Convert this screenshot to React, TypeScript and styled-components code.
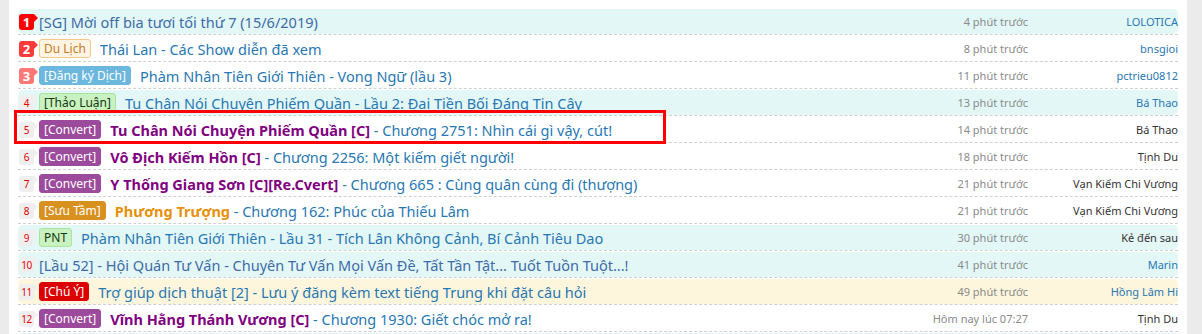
import React from "react";
import styled, { createGlobalStyle, css } from "styled-components";

const Global = createGlobalStyle`
  html, body { margin: 0; padding: 0; overflow: hidden; }
  body { background: #ebebeb; font-family: "Noto Sans", "Open Sans", sans-serif; }
`;

const Panel = styled.div`
  margin-left: 9px;
  width: 1178px;
  min-height: 334px;
  background: #fff;
  padding: 8px 9px 0;
  box-sizing: border-box;
`;

const List = styled.ul`
  list-style: none;
  margin: 0;
  padding: 0;
`;

const Item = styled.li`
  position: relative;
  padding-top: 1px;
  border-bottom: 1px dashed #cfcfcf;
`;

type Tone = "cyan" | "yellow" | "white";
const bgs: Record<Tone, string> = { cyan: "#e3f7f6", yellow: "#fdf5dc", white: "transparent" };

const RowBody = styled.div<{ $tone: Tone }>`
  height: 25px;
  display: flex;
  align-items: center;
  padding-left: 1px;
  border-radius: 5px;
  background: ${(p) => bgs[p.$tone]};
`;

const rankColors = ["#ff0000", "#ff3a3a", "#ff7878"];

const Rank = styled.span<{ $n: number }>`
  position: relative;
  flex: none;
  width: 15px;
  height: 16px;
  margin-right: 5px;
  border-radius: 3px 0 3px 3px;
  display: flex;
  align-items: center;
  justify-content: center;
  font-size: ${(p) => (p.$n <= 3 ? "13px" : "10px")};
  font-weight: ${(p) => (p.$n <= 3 ? 700 : 400)};
  letter-spacing: ${(p) => (p.$n >= 10 ? "-0.5px" : "0")};
  color: ${(p) => (p.$n <= 3 ? "#fff" : "#e60000")};
  background: ${(p) => (p.$n <= 3 ? rankColors[p.$n - 1] : "#efefef")};
  &::after {
    content: "";
    position: absolute;
    right: -4px;
    top: 0;
    border-left: 4px solid ${(p) => (p.$n <= 3 ? rankColors[p.$n - 1] : "#efefef")};
    border-top: 4px solid transparent;
    border-bottom: 4px solid transparent;
  }
`;

type Pfx = "orangeOutline" | "blue" | "green" | "purple" | "orange" | "red";
const prefixStyles: Record<Pfx, ReturnType<typeof css>> = {
  orangeOutline: css`background:#fff4e3;border-color:#f6c887;color:#c47a22;`,
  blue: css`background:#6cb7dd;border-color:#6cb7dd;color:#fff;`,
  green: css`background:#c9f2c0;border-color:#a8e3a0;color:#143814;`,
  purple: css`background:#9c4a9c;border-color:#9c4a9c;color:#fff;`,
  orange: css`background:#d8901e;border-color:#d8901e;color:#fff;`,
  red: css`background:#dd0000;border-color:#dd0000;color:#fff;`,
};

const Prefix = styled.span<{ $kind: Pfx }>`
  flex: none;
  height: 19px;
  line-height: 18px;
  box-sizing: border-box;
  padding: 0 4px;
  border: 1px solid;
  border-radius: 3px;
  font-size: 12px;
  margin-right: 9px;
  ${(p) => prefixStyles[p.$kind]}
`;

const Title = styled.span<{ $c?: string }>`
  flex: 1;
  min-width: 0;
  white-space: nowrap;
  overflow: hidden;
  font-size: 14.5px;
  color: ${(p) => p.$c ?? "#2878b4"};
`;

const Strong = styled.span<{ $c: string }>`
  font-weight: 700;
  color: ${(p) => p.$c};
`;

const Time = styled.span`
  flex: none;
  width: 150px;
  text-align: right;
  font-size: 11px;
  color: #8a8a8a;
`;

const Author = styled.span<{ $blue: boolean }>`
  flex: none;
  width: 150px;
  text-align: right;
  font-size: 11px;
  color: ${(p) => (p.$blue ? "#2a78b5" : "#333")};
`;

const Highlight = styled.div`
  position: absolute;
  left: -4px;
  top: -6px;
  width: 652px;
  height: 34px;
  box-sizing: border-box;
  border: 3px solid #ff0000;
  pointer-events: none;
`;

type Row = {
  n: number;
  tone: Tone;
  prefix?: [Pfx, string];
  strong?: [string, string];
  title: string;
  time: string;
  author: string;
  blue: boolean;
  hl?: boolean;
  titleColor?: string;
};

const PURPLE = "#800080";
const rows: Row[] = [
  { n: 1, tone: "cyan", title: "[SG] Mời off bia tươi tối thứ 7 (15/6/2019)", time: "4 phút trước", author: "LOLOTICA", blue: true, titleColor: "#3d6ca8" },
  { n: 2, tone: "white", prefix: ["orangeOutline", "Du Lịch"], title: "Thái Lan - Các Show diễn đã xem", time: "8 phút trước", author: "bnsgioi", blue: true },
  { n: 3, tone: "white", prefix: ["blue", "[Đăng ký Dịch]"], title: "Phàm Nhân Tiên Giới Thiên - Vong Ngữ (lầu 3)", time: "11 phút trước", author: "pctrieu0812", blue: true },
  { n: 4, tone: "cyan", prefix: ["green", "[Thảo Luận]"], title: "Tu Chân Nói Chuyện Phiếm Quần - Lầu 2: Đại Tiền Bối Đáng Tin Cậy", time: "13 phút trước", author: "Bá Thao", blue: true },
  { n: 5, tone: "white", prefix: ["purple", "[Convert]"], strong: ["Tu Chân Nói Chuyện Phiếm Quần [C]", PURPLE], title: " - Chương 2751: Nhìn cái gì vậy, cút!", time: "14 phút trước", author: "Bá Thao", blue: false, hl: true },
  { n: 6, tone: "white", prefix: ["purple", "[Convert]"], strong: ["Vô Địch Kiếm Hồn [C]", PURPLE], title: " - Chương 2256: Một kiếm giết người!", time: "18 phút trước", author: "Tịnh Du", blue: false },
  { n: 7, tone: "white", prefix: ["purple", "[Convert]"], strong: ["Y Thống Giang Sơn [C][Re.Cvert]", PURPLE], title: " - Chương 665 : Cùng quân cùng đi (thượng)", time: "21 phút trước", author: "Vạn Kiếm Chi Vương", blue: false },
  { n: 8, tone: "white", prefix: ["orange", "[Sưu Tầm]"], strong: ["Phương Trượng", "#e8900a"], title: " - Chương 162: Phúc của Thiếu Lâm", time: "21 phút trước", author: "Vạn Kiếm Chi Vương", blue: false },
  { n: 9, tone: "cyan", prefix: ["green", "PNT"], title: "Phàm Nhân Tiên Giới Thiên - Lầu 31 - Tích Lân Không Cảnh, Bí Cảnh Tiêu Dao", time: "30 phút trước", author: "Kẻ đến sau", blue: false },
  { n: 10, tone: "cyan", title: "[Lầu 52] - Hội Quán Tư Vấn - Chuyên Tư Vấn Mọi Vấn Đề, Tất Tần Tật... Tuốt Tuồn Tuột...!", time: "41 phút trước", author: "Marin", blue: true, titleColor: "#3d6ca8" },
  { n: 11, tone: "yellow", prefix: ["red", "[Chú Ý]"], title: "Trợ giúp dịch thuật [2] - Lưu ý đăng kèm text tiếng Trung khi đặt câu hỏi", time: "49 phút trước", author: "Hồng Lâm Hi", blue: true },
  { n: 12, tone: "white", prefix: ["purple", "[Convert]"], strong: ["Vĩnh Hằng Thánh Vương [C]", PURPLE], title: " - Chương 1930: Giết chóc mở ra!", time: "Hôm nay lúc 07:27", author: "Tịnh Du", blue: false },
];

const Spill = styled.div`
  margin-top: 1px;
  height: 25px;
  border-radius: 5px;
  background: #e3f7f6;
`;

export default function App() {
  return (
    <>
      <Global />
      <Panel>
        <List>
          {rows.map((r) => (
            <Item key={r.n}>
              <RowBody $tone={r.tone}>
                <Rank $n={r.n}>{r.n}</Rank>
                {r.prefix && <Prefix $kind={r.prefix[0]}>{r.prefix[1]}</Prefix>}
                <Title $c={r.titleColor}>
                  {r.strong && <Strong $c={r.strong[1]}>{r.strong[0]}</Strong>}
                  {r.title}
                </Title>
                <Time>{r.time}</Time>
                <Author $blue={r.blue}>{r.author}</Author>
              </RowBody>
              {r.hl && <Highlight />}
            </Item>
          ))}
        </List>
        <Spill />
      </Panel>
    </>
  );
}
